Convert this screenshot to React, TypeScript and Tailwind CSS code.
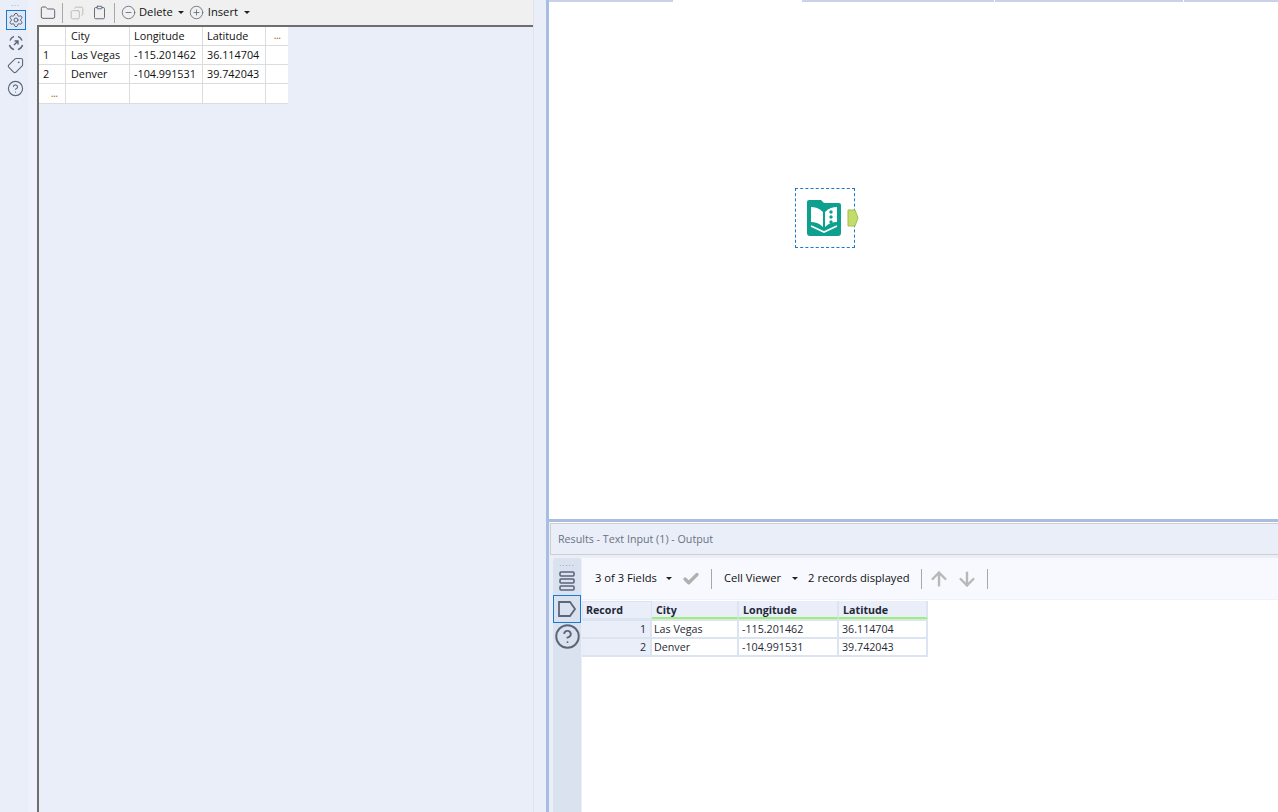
import { ArrowDown, ArrowUp, Check, CircleHelp, CircleMinus, CirclePlus, Copy, Folder, Clipboard, Settings, Tag } from "lucide-react";

const inputRows = [
  ["1", "Las Vegas", "-115.201462", "36.114704"],
  ["2", "Denver", "-104.991531", "39.742043"],
];

const resultRows = [
  ["1", "Las Vegas", "-115.201462", "36.114704"],
  ["2", "Denver", "-104.991531", "39.742043"],
];

const Caret = ({ ml = "ml-[6px]" }: { ml?: string }) => (
  <span className={`${ml} inline-block h-0 w-0 border-x-[3px] border-t-[3px] border-x-transparent border-t-[#222]`}></span>
);

const Divider = ({ h = "h-5" }: { h?: string }) => <div className={`${h} w-px bg-[#a8a8a8]`}></div>;

const Cell = ({ w, children, last, pl = "pl-1" }: { w: string; children?: React.ReactNode; last?: boolean; pl?: string }) => (
  <div className={`${w} ${pl} ${last ? "" : "border-r"} flex h-full shrink-0 items-center border-[#dcdcdc] text-[#111]`}>
    {children}
  </div>
);

const App = () => {
  return (
    <div className="flex h-[812px] w-[1278px] overflow-hidden bg-[#e9eef9] font-['Open_Sans',sans-serif] text-[11.2px]">
      {/* config panel */}
      <div className="flex w-[546px] shrink-0">
        <div className="flex w-[28px] shrink-0 flex-col items-center bg-[#e9eef9] pl-[3px] pt-[2px]">
          <div className="mb-[4px] text-[7px] leading-[4px] tracking-[1px] text-[#8a93a5]">...</div>
          <div className="flex h-[20px] w-[20px] items-center justify-center border border-[#1a7ad0] bg-[#dfe7f6]">
            <Settings size={16} strokeWidth={1.5} className="text-[#5b6678]" />
          </div>
          <svg width="18" height="18" viewBox="0 0 18 18" className="mt-[4px] text-[#5b6678]" fill="none" stroke="currentColor" strokeWidth="1.4">
            <path d="M3 6.5A7 7 0 0 1 7 2.4M11 2.4A7 7 0 0 1 15 6.5M15.6 11A7 7 0 0 1 11 15.6M7 15.6A7 7 0 0 1 2.4 11" />
            <path d="M7 11l4-4M7.5 7H11v3.5" />
          </svg>
          <Tag size={17} strokeWidth={1.5} className="mt-[5px] -scale-x-100 text-[#5b6678]" />
          <CircleHelp size={17} strokeWidth={1.6} className="mt-[6px] text-[#5b6678]" />
        </div>
        <div className="w-[9px] shrink-0 bg-[#eef1f9]"></div>
        <div className="flex w-[496px] shrink-0 flex-col">
          <div className="flex h-[25px] items-center bg-[#f0f0f0]">
            <Folder size={16} strokeWidth={1.5} className="ml-[3px] text-[#5b6678]" />
            <div className="ml-[6px]"><Divider /></div>
            <Copy size={14} strokeWidth={1.5} className="ml-[7px] -scale-x-100 text-[#b6b6b6]" />
            <Clipboard size={15} strokeWidth={1.5} className="ml-[8px] text-[#5b6678]" />
            <div className="ml-[7px]"><Divider /></div>
            <CircleMinus size={15} strokeWidth={1.3} className="ml-[6px] text-[#5b6678]" />
            <span className="ml-[3px] text-[#111]">Delete</span>
            <Caret ml="ml-[5px]" />
            <CirclePlus size={15} strokeWidth={1.3} className="ml-[5px] text-[#5b6678]" />
            <span className="ml-[4px] text-[#111]">Insert</span>
            <Caret />
          </div>
          <div className="flex-1 border-l-2 border-t-2 border-[#6e6e6e] bg-[#e9eef9] text-[10.8px]">
            <div className="w-[249px] bg-white">
              <div className="flex h-[19px] border-b border-[#dcdcdc]">
                <Cell w="w-[27px]" />
                <Cell w="w-[64px]" pl="pl-[5px]">City</Cell>
                <Cell w="w-[73px]">Longitude</Cell>
                <Cell w="w-[63px]">Latitude</Cell>
                <Cell w="w-[22px]" last><span className="ml-1 text-[8px] font-bold text-[#b07a10]">...</span></Cell>
              </div>
              {inputRows.map((r) => (
                <div key={r[0]} className="flex h-[19px] border-b border-[#dcdcdc]">
                  <Cell w="w-[27px]">{r[0]}</Cell>
                  <Cell w="w-[64px]" pl="pl-[5px]">{r[1]}</Cell>
                  <Cell w="w-[73px]">{r[2]}</Cell>
                  <Cell w="w-[63px]">{r[3]}</Cell>
                  <Cell w="w-[22px]" last />
                </div>
              ))}
              <div className="flex h-[20px] border-b border-[#dcdcdc]">
                <Cell w="w-[27px]"><span className="ml-2 text-[8px] font-bold text-[#b07a10]">...</span></Cell>
                <Cell w="w-[64px]" />
                <Cell w="w-[73px]" />
                <Cell w="w-[63px]" />
                <Cell w="w-[22px]" last />
              </div>
            </div>
          </div>
        </div>
        <div className="w-px shrink-0 bg-[#e4e4e4]"></div>
        <div className="flex-1 bg-[#e9eef9]"></div>
      </div>

      {/* splitter */}
      <div className="w-[3px] shrink-0 bg-[#a9bde0]"></div>

      <div className="flex min-w-0 flex-1 flex-col">
        {/* canvas */}
        <div className="flex h-[519px] shrink-0 flex-col bg-white">
          <div className="flex h-[2px] shrink-0">
            <div className="w-[124px] bg-[#c9d2ea]"></div>
            <div className="w-[129px]"></div>
            <div className="w-[193px] border-r border-white bg-[#c9d2ea]"></div>
            <div className="w-[189px] border-r border-white bg-[#c9d2ea]"></div>
            <div className="flex-1 bg-[#c9d2ea]"></div>
          </div>
          <div className="ml-[246px] mt-[186px] flex items-center">
            <div className="flex h-[60px] w-[60px] items-center justify-center border border-dashed border-[#1a7ad0]">
              <svg width="38" height="38" viewBox="0 0 38 38" className="-translate-x-px">
                <path d="M2 3a2 2 0 0 1 2-2h12l3 3h15a2 2 0 0 1 2 2v28a3 3 0 0 1-3 3H5a3 3 0 0 1-3-3z" fill="#0da08f" />
                <path d="M6 8c4 0 8 1 12 5v15c-4-4-8-5-12-5z" fill="#fff" />
                <path d="M32 8c-4 0-8 1-12 5v15c4-4 8-5 12-5z" fill="#fff" />
                <circle cx="26" cy="13" r="1.7" fill="#0da08f" />
                <circle cx="26" cy="18" r="1.7" fill="#0da08f" />
                <circle cx="26" cy="23" r="1.7" fill="#0da08f" />
                <path d="M6 27l13 6 13-6" fill="none" stroke="#fff" strokeWidth="1.6" />
              </svg>
            </div>
            <svg width="12" height="18" viewBox="0 0 12 18" className="-ml-[9px] mr-0 translate-x-[1px]">
              <path d="M1 1h7l3 8-3 8H1z" fill="#c3dc6a" stroke="#9fbf4f" />
            </svg>
          </div>
        </div>

        {/* splitter */}
        <div className="h-[3px] shrink-0 bg-[#a9bde0]"></div>

        {/* results */}
        <div className="flex min-h-0 flex-1 flex-col bg-[#e9eef9] pl-[1px]">
          <div className="h-px shrink-0 bg-white"></div>
          <div className="flex h-[32px] shrink-0 items-center border border-r-0 border-[#cfcfcf] bg-[#e9eef9] pl-[7px] text-[10.7px] text-[#6b7280]">
            Results - Text Input (1) - Output
          </div>
          <div className="flex min-h-0 flex-1 pt-[3px]">
            <div className="flex w-[32px] shrink-0 flex-col pl-[3px] pr-px">
              <div className="flex flex-1 flex-col items-center rounded-t-[3px] bg-[#dae2f0]">
                <div className="mt-[3px] text-[8px] leading-[4px] tracking-[1px] text-[#8a93a5]">.....</div>
                <svg width="18" height="20" viewBox="0 0 18 20" className="mt-[6px]" fill="none" stroke="#5b6678" strokeWidth="1.6">
                  <rect x="2" y="1" width="14" height="4" rx="1" />
                  <rect x="2" y="8" width="14" height="4" rx="1" />
                  <rect x="2" y="15" width="14" height="4" rx="1" />
                </svg>
                <div className="mt-[4px] flex h-[28px] w-[28px] items-center justify-center border border-[#1a7ad0]">
                  <svg width="20" height="18" viewBox="0 0 20 18" fill="none" stroke="#5b6678" strokeWidth="1.8">
                    <path d="M2 2h11l5 7-5 7H2z" />
                  </svg>
                </div>
                <CircleHelp size={27} strokeWidth={1.7} className="text-[#5b6678]" />
              </div>
            </div>
            <div className="flex min-w-0 flex-1 flex-col bg-white">
              <div className="flex h-[42px] shrink-0 items-center border-b border-[#f0f2f7] bg-[#f7f9fe] pl-[13px] text-[#111]">
                <span>3 of 3 Fields</span>
                <Caret ml="ml-[9px]" />
                <Check size={18} strokeWidth={4.5} className="ml-[10px] text-[#b0b0b0]" />
                <div className="ml-[11px]"><Divider /></div>
                <span className="ml-[12px]">Cell Viewer</span>
                <Caret ml="ml-[11px]" />
                <span className="ml-[10px]">2 records displayed</span>
                <div className="ml-[11px]"><Divider /></div>
                <ArrowUp size={22} strokeWidth={2.6} className="ml-[6px] text-[#b8b8b8]" />
                <ArrowDown size={22} strokeWidth={2.6} className="ml-[6px] text-[#b8b8b8]" />
                <div className="ml-[9px]"><Divider /></div>
              </div>
              <div className="mt-px w-[346px] text-[10.7px] text-[#1f2937]">
                <div className="flex h-[18px] font-bold">
                  <div className="flex w-[70px] items-center border border-[#dce3f1] bg-[#e9eef9] pl-[3px]">Record</div>
                  <div className="flex w-[87px] items-center border-b-2 border-r-2 border-b-[#9cf07a] border-r-[#dce3f1] bg-[#e9eef9] pl-[4px] pt-[2px]">City</div>
                  <div className="flex w-[100px] items-center border-b-2 border-r-2 border-b-[#9cf07a] border-r-[#dce3f1] bg-[#e9eef9] pl-[4px] pt-[2px]">Longitude</div>
                  <div className="flex w-[89px] items-center border-b-2 border-r-2 border-b-[#9cf07a] border-r-[#dce3f1] bg-[#e9eef9] pl-[4px] pt-[2px]">Latitude</div>
                </div>
                <div className="h-[2px] bg-[#dce3f1]"></div>
                {resultRows.map((r) => (
                  <div key={r[0]} className="flex h-[18px] border-b-2 border-[#dce3f1]">
                    <div className="flex w-[70px] items-center justify-end border-r-2 border-[#dce3f1] bg-[#e9eef9] pr-[4px]">{r[0]}</div>
                    <div className="flex w-[87px] items-center border-r-2 border-[#dce3f1] pl-[2px]">{r[1]}</div>
                    <div className="flex w-[100px] items-center border-r-2 border-[#dce3f1] pl-[3px]">{r[2]}</div>
                    <div className="flex w-[89px] items-center border-r-2 border-[#dce3f1] pl-[3px]">{r[3]}</div>
                  </div>
                ))}
              </div>
            </div>
          </div>
        </div>
      </div>
    </div>
  );
};

export default App;
